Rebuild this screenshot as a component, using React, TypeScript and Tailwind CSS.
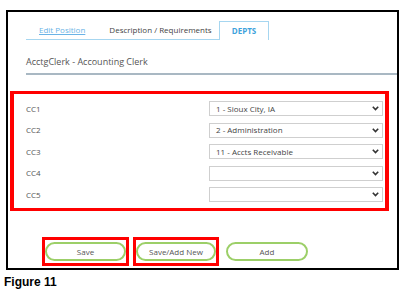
import React from 'react'

type Row = { label: string, value: string }

const rows: Row[] = [
  { label: 'CC1', value: '1 - Sioux City, IA' },
  { label: 'CC2', value: '2 - Administration' },
  { label: 'CC3', value: '11 - Accts Receivable' },
  { label: 'CC4', value: '' },
  { label: 'CC5', value: '' },
]

const Chevron = () => (
  <svg width="7" height="5" viewBox="0 0 7 5" className="shrink-0">
    <polyline points="0.8,0.8 3.5,3.6 6.2,0.8" fill="none" stroke="#333" strokeWidth="1.6" />
  </svg>
)

const Button = ({ label, width }: { label: string, width: string }) => (
  <div
    className={`${width} h-[19px] rounded-full border-2 border-[#9ccf68] bg-white flex items-center justify-center text-[8px] text-[#555]`}
  >
    {label}
  </div>
)

const App = () => {
  return (
    <div className="w-[408px] h-[301px] bg-white font-['Open_Sans',sans-serif] overflow-hidden">
      <div className="ml-[6px] pt-[10px]">
        <div className="w-[393px] h-[260px] border-2 border-black flex flex-col">
          {/* tabs */}
          <div className="ml-[18px] mt-[9px] flex items-end h-[19px]">
            <div className="w-[193px] h-full flex items-center border-b-[1.5px] border-[#a6d6f0] text-[8px]">
              <span className="ml-[13px] text-[#6ab3e6] underline">Edit Position</span>
              <span className="ml-[24px] text-[#444]">Description / Requirements</span>
            </div>
            <div className="w-[50px] h-full flex items-center justify-center border-x-[1.5px] border-t-[1.5px] border-[#a6d6f0] text-[8px] font-bold text-[#3fa3dc]">
              DEPTS
            </div>
          </div>

          {/* title */}
          <div className="ml-[18px] h-[35px] flex items-end pb-[5px] border-b-2 border-[#a9b8c3] text-[9px] text-[#555]">
            AcctgClerk - Accounting Clerk
          </div>

          {/* cost centers */}
          <div className="ml-[2px] mt-[16px] w-[379px] h-[120px] border-x-4 border-y-[3px] border-[#ff0000] pt-[7px] pl-[12px] pr-[2px] flex flex-col gap-[6.5px]">
            {rows.map((row) => (
              <div key={row.label} className="flex items-center justify-between h-[15px]">
                <span className="text-[8px] text-[#555]">{row.label}</span>
                <div className="w-[174px] h-[15px] border border-[#cfcfcf] bg-white flex items-center justify-between pl-[6px] pr-[3px] text-[8px] text-[#444]">
                  <span>{row.value}</span>
                  <Chevron />
                </div>
              </div>
            ))}
          </div>

          {/* buttons */}
          <div className="ml-[34px] mt-[26px] flex gap-[4px]">
            <div className="border-[3px] border-[#ff0000] py-[2px]">
              <Button label="Save" width="w-[81px]" />
            </div>
            <div className="border-[3px] border-[#ff0000] py-[2px]">
              <Button label="Save/Add New" width="w-[80px]" />
            </div>
            <div className="border-[3px] border-transparent py-[2px]">
              <Button label="Add" width="w-[82px]" />
            </div>
          </div>
        </div>
      </div>
      <div className="pl-[4px] mt-[5px] font-['Liberation_Sans',Arial,sans-serif] font-bold text-[12px] leading-[14px] text-black">
        Figure 11
      </div>
    </div>
  )
}

export default App
